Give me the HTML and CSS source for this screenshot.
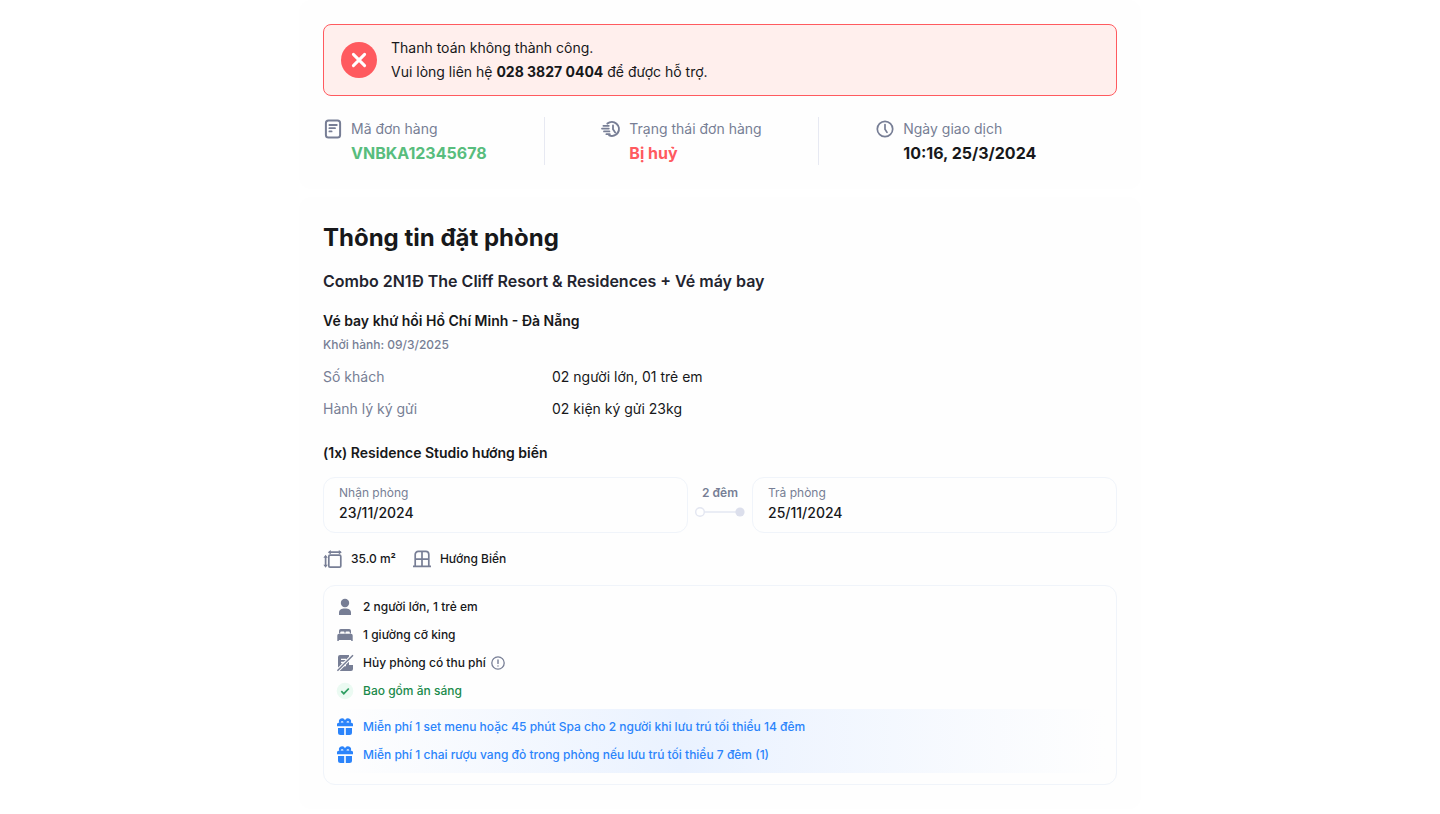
FILE: index.html
```html
<!DOCTYPE html>
<html lang="vi">
<head>
  <meta charset="UTF-8" />
  <meta name="viewport" content="width=device-width, initial-scale=1" />
  <title>Thông tin đặt phòng</title>
  <link rel="stylesheet" href="styles.css">
</head>
<body>

<main class="page">

  <!-- Trạng thái thanh toán -->
  <section class="card">
    <div class="alert" role="alert">
      <svg class="alert-icon" viewBox="0 0 36 36" aria-hidden="true">
        <circle cx="18" cy="18" r="18" fill="#ff5a5f" />
        <path d="M12.4 12.4l11.2 11.2M23.6 12.4L12.4 23.6" stroke="#fff" stroke-width="3" stroke-linecap="round" />
      </svg>
      <p>Thanh toán không thành công.<br />Vui lòng liên hệ <strong>028 3827 0404</strong> để được hỗ trợ.</p>
    </div>

    <div class="order">
      <div class="order-item">
        <svg class="icon" viewBox="0 0 20 20" fill="none" stroke="currentColor" aria-hidden="true">
          <rect x="2.9" y="1.4" width="14.2" height="17.2" rx="2.6" stroke-width="2" />
          <path d="M6.4 6h7.4M6.4 9.2h5.6M6.4 12.4h2.2" stroke-width="1.8" stroke-linecap="round" />
        </svg>
        <div>
          <p class="order-label">Mã đơn hàng</p>
          <p class="order-value code">VNBKA12345678</p>
        </div>
      </div>
      <div class="order-item">
        <svg class="icon" viewBox="0 0 20 20" fill="none" stroke="currentColor" stroke-linecap="round" aria-hidden="true">
          <path d="M6.4 4.6A7 7 0 1 1 8.2 16.4" stroke-width="2" />
          <path d="M2.4 6.8h5.4M1 9.6h6.8M3 12.4h5.4M5.4 15.2h3.4" stroke-width="1.8" />
          <path d="M12 6.4v3.8l2.2 3.4" stroke-width="1.8" />
        </svg>
        <div>
          <p class="order-label">Trạng thái đơn hàng</p>
          <p class="order-value cancelled">Bị huỷ</p>
        </div>
      </div>
      <div class="order-item">
        <svg class="icon" viewBox="0 0 20 20" fill="none" stroke="currentColor" stroke-linecap="round" aria-hidden="true">
          <circle cx="10" cy="10" r="7.7" stroke-width="1.7" />
          <path d="M10 5.6v4.6l2 3.2" stroke-width="1.7" />
        </svg>
        <div>
          <p class="order-label">Ngày giao dịch</p>
          <p class="order-value">10:16, 25/3/2024</p>
        </div>
      </div>
    </div>
  </section>

  <!-- Thông tin đặt phòng -->
  <section class="card">
    <h1>Thông tin đặt phòng</h1>
    <h2>Combo 2N1Đ The Cliff Resort &amp; Residences + Vé máy bay</h2>

    <h3>Vé bay khứ hồi Hồ Chí Minh - Đà Nẵng</h3>
    <p class="departure">Khởi hành: 09/3/2025</p>
    <dl class="flight">
      <dt>Số khách</dt>
      <dd>02 người lớn, 01 trẻ em</dd>
      <dt>Hành lý ký gửi</dt>
      <dd>02 kiện ký gửi 23kg</dd>
    </dl>

    <h3>(1x) Residence Studio hướng biển</h3>
    <div class="stay">
      <div class="stay-date">
        <p class="stay-label">Nhận phòng</p>
        <p class="stay-value">23/11/2024</p>
      </div>
      <div class="nights">
        <p>2 đêm</p>
        <svg width="50" height="10" viewBox="0 0 50 10" aria-hidden="true">
          <path d="M9 5h32" stroke="#eaedf5" stroke-width="2" />
          <circle cx="5" cy="5" r="4.3" fill="#fff" stroke="#e3e6f1" stroke-width="1.4" />
          <circle cx="45" cy="5" r="4.6" fill="#dcdfec" />
        </svg>
      </div>
      <div class="stay-date">
        <p class="stay-label">Trả phòng</p>
        <p class="stay-value">25/11/2024</p>
      </div>
    </div>

    <ul class="features">
      <li>
        <svg class="icon" viewBox="0 0 20 20" fill="none" stroke="currentColor" aria-hidden="true">
          <rect x="5.8" y="6.2" width="12" height="12" rx="1.2" stroke-width="1.7" />
          <path d="M6 3.2h11.6M2.6 7.5v9.6" stroke-width="1.7" />
          <path d="M7.8 1v4.4l-3-2.2zM15.8 1v4.4l3-2.2zM.4 8.8h4.4l-2.2-3zM.4 15.8h4.4l-2.2 3z" fill="currentColor" stroke="none" />
        </svg>
        35.0 m²
      </li>
      <li>
        <svg class="icon" viewBox="0 0 20 20" fill="none" stroke="currentColor" stroke-width="1.7" aria-hidden="true">
          <path d="M3.2 17.4v-12a3 3 0 0 1 3-3h7.6a3 3 0 0 1 3 3v12M10 2.4v15M3.2 10.2h13.6M1 17.4h18" />
        </svg>
        Hướng Biển
      </li>
    </ul>

    <div class="details">
      <ul>
        <li>
          <svg class="icon" viewBox="0 0 20 20" fill="currentColor" aria-hidden="true">
            <circle cx="10" cy="6" r="4.2" />
            <path d="M4 18v-2.4c0-2.8 2.2-4.2 6-4.2s6 1.4 6 4.2V18z" />
          </svg>
          2 người lớn, 1 trẻ em
        </li>
        <li>
          <svg class="icon" viewBox="0 0 20 20" fill="currentColor" aria-hidden="true">
            <path d="M4 8.4V5.8A1.8 1.8 0 0 1 5.8 4h8.4A1.800 1.800 0 0 1 16 5.800v2.600h-1.200v-.8a1 1 0 0 0-1-1h-2.400a1 1 0 0 0-1 1v.8h-.8v-.8a1 1 0 0 0-1-1H6.200a1 1 0 0 0-1 1v.8z" />
            <path d="M4 8.800h12a1.700 1.700 0 0 1 1.700 1.700V16h-1.500v-1H3.800v1H2.300v-5.500A1.700 1.700 0 0 1 4 8.800z" />
          </svg>
          1 giường cỡ king
        </li>
        <li>
          <svg class="icon" viewBox="0 0 20 20" aria-hidden="true">
            <path d="M5 2h9v10h4v4a2 2 0 0 1-2 2H5a2 2 0 0 1-2-2V4a2 2 0 0 1 2-2z" fill="currentColor" />
            <path d="M6 6.3h5M6 9.5h5M8 12.7h3" stroke="#fefefe" stroke-width="1.3" />
            <path d="M1.6 18.6L18.2 2" stroke="#fefefe" stroke-width="3.6" />
            <path d="M2.4 17.8L18 2.2" stroke="currentColor" stroke-width="1.5" />
          </svg>
          Hủy phòng có thu phí
          <button class="info" type="button" aria-label="Chi tiết phí hủy phòng">
            <svg viewBox="0 0 16 16" fill="none" stroke="currentColor" stroke-linecap="round" aria-hidden="true">
              <circle cx="8" cy="8" r="6.2" stroke-width="1.3" />
              <path d="M8 5v3.4M8 10.9v.1" stroke-width="1.4" />
            </svg>
          </button>
        </li>
        <li class="included">
          <svg class="icon" viewBox="0 0 20 20" fill="none" aria-hidden="true">
            <circle cx="10" cy="10" r="8.3" fill="#ebfaf2" />
            <path d="M6.3 10.2l2.5 2.5 5-5.2" stroke="#2f9e62" stroke-width="1.7" />
          </svg>
          Bao gồm ăn sáng
        </li>
      </ul>
      <ul class="offers">
        <li>
          <svg class="icon" viewBox="0 0 20 20" fill="currentColor" aria-hidden="true">
            <path d="M2 9.3V7.2a1.5 1.5 0 0 1 1.5-1.5h.7A3.1 3.1 0 0 1 10 3.3a3.1 3.1 0 0 1 5.8 2.4h.7A1.5 1.5 0 0 1 18 7.2v2.1zM3 10.9h6.2V18H5.5A2.5 2.5 0 0 1 3 15.5zM10.8 10.9H17v4.6a2.5 2.5 0 0 1-2.5 2.5h-3.7z" />
            <path d="M5.7 5.6a1.4 1.4 0 1 1 2.8 0zM11.5 5.6a1.4 1.4 0 1 1 2.8 0z" fill="#fff" />
          </svg>
          Miễn phí 1 set menu hoặc 45 phút Spa cho 2 người khi lưu trú tối thiểu 14 đêm
        </li>
        <li>
          <svg class="icon" viewBox="0 0 20 20" fill="currentColor" aria-hidden="true">
            <path d="M2 9.3V7.2a1.5 1.5 0 0 1 1.5-1.5h.7A3.1 3.1 0 0 1 10 3.3a3.1 3.1 0 0 1 5.8 2.4h.7A1.5 1.5 0 0 1 18 7.2v2.1zM3 10.9h6.2V18H5.5A2.5 2.5 0 0 1 3 15.5zM10.8 10.9H17v4.6a2.5 2.5 0 0 1-2.5 2.5h-3.7z" />
            <path d="M5.7 5.6a1.4 1.4 0 1 1 2.8 0zM11.5 5.6a1.4 1.4 0 1 1 2.8 0z" fill="#fff" />
          </svg>
          Miễn phí 1 chai rượu vang đỏ trong phòng nếu lưu trú tối thiểu 7 đêm (1)
        </li>
      </ul>
    </div>
  </section>

</main>

</body>
</html>
```
FILE: styles.css
```css
* {
  box-sizing: border-box;
}

body {
  margin: 0;
  background: #fff;
  color: #17181a;
  font-family: Inter, "Liberation Sans", sans-serif;
  font-size: 14px;
  line-height: 24px;
}

h1, h2, h3, p, ul, dl, dd {
  margin: 0;
}

ul {
  padding: 0;
  list-style: none;
}

.page {
  max-width: 842px;
  margin: 0 auto;
  display: flex;
  flex-direction: column;
  gap: 8px;
}

.card {
  padding: 24px;
  background: #fefefe;
  border-radius: 12px;
}

.icon {
  width: 20px;
  height: 20px;
  flex-shrink: 0;
  color: #777e95;
}

/* alert */
.alert {
  display: flex;
  align-items: center;
  gap: 14px;
  padding: 11px 17px;
  background: #ffefed;
  border: 1px solid #ff5a5f;
  border-radius: 8px;
}

.alert-icon {
  width: 36px;
  height: 36px;
  flex-shrink: 0;
}

.alert strong {
  font-weight: 700;
}

/* order */
.order {
  display: grid;
  grid-template-columns: 28% 34.5% 1fr;
  margin-top: 21px;
}

.order-item {
  display: flex;
  gap: 8px;
}

.order-item .icon {
  margin-top: 2px;
}

.order-item + .order-item {
  padding-left: 56px;
}

.order-item:not(:last-child) {
  border-right: 1px solid #e7e9f2;
}

.order-label {
  color: #777e95;
}

.order-value {
  font-size: 16px;
  font-weight: 700;
}

.code {
  color: #58bd7d;
}

.cancelled {
  color: #ff5a5f;
}

/* booking */
h1 {
  font-size: 24px;
  line-height: 34px;
  font-weight: 700;
}

h2 {
  margin: 14px 0 16px;
  color: #23242f;
  font-size: 16px;
  font-weight: 600;
}

h3 {
  font-size: 14px;
  font-weight: 600;
}

.departure {
  color: #777e95;
  font-size: 12px;
  font-weight: 500;
}

.flight {
  display: grid;
  grid-template-columns: 229px 1fr;
  row-gap: 8px;
  margin: 8px 0 20px;
}

.flight dt {
  color: #777e95;
}

.stay {
  display: grid;
  grid-template-columns: 1fr 64px 1fr;
  margin-top: 12px;
}

.stay-date {
  padding: 7px 15px;
  border: 1px solid #f0f4fa;
  border-radius: 12px;
}

.stay-label {
  color: #777e95;
  font-size: 12px;
  line-height: 16px;
}

.stay-value {
  font-weight: 500;
}

.nights {
  display: flex;
  flex-direction: column;
  align-items: center;
  gap: 6px;
  padding-top: 8px;
  color: #777e95;
  font-size: 12px;
  line-height: 16px;
  font-weight: 600;
}

.features {
  display: flex;
  gap: 16px;
  margin: 16px 0;
}

.features li,
.details li {
  display: flex;
  align-items: center;
  gap: 8px;
  font-size: 12px;
  line-height: 20px;
  font-weight: 500;
}

.details {
  padding: 11px;
  border: 1px solid #f0f4fa;
  border-radius: 12px;
}

.details ul {
  display: flex;
  flex-direction: column;
  gap: 8px;
}

.info {
  width: 16px;
  height: 16px;
  margin-left: -4px;
  padding: 0;
  background: none;
  border: none;
  color: #777e95;
  cursor: pointer;
}

.info svg {
  display: block;
}

.details .included {
  color: #1b8a4b;
}

.details .offers {
  margin-top: 8px;
  padding: 8px 0;
  background: linear-gradient(90deg, #fefefe, #eaf2ff 45%, #fefefe);
}

.offers li,
.offers .icon {
  color: #2b84fb;
}
```
